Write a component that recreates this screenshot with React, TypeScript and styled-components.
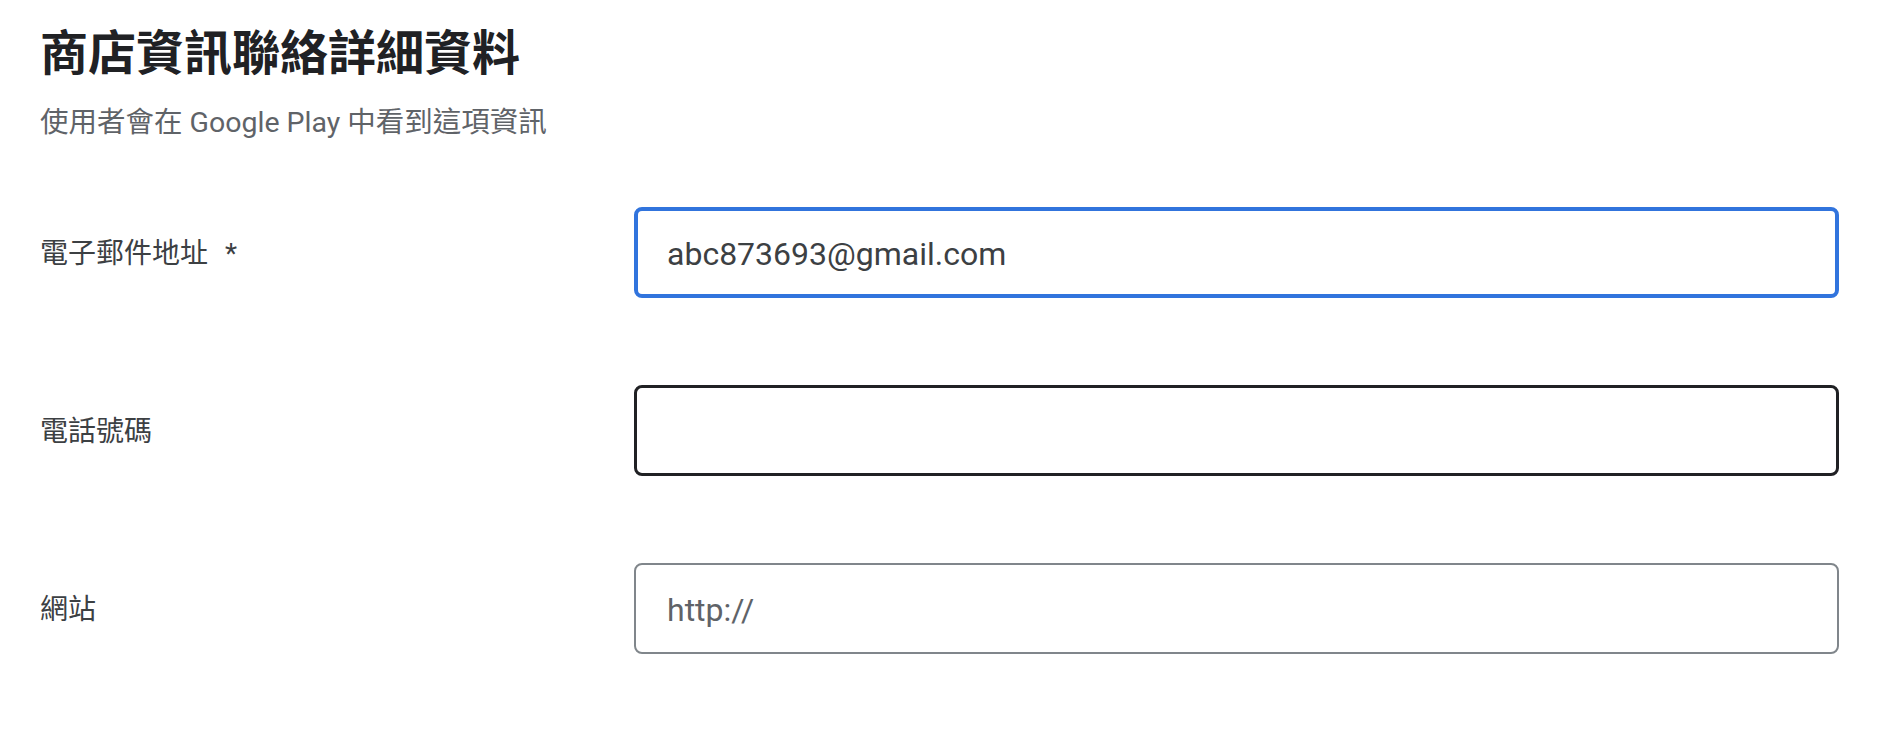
import React from "react";
import styled, { createGlobalStyle } from "styled-components";

const GlobalStyle = createGlobalStyle`
  html, body {
    margin: 0;
    padding: 0;
    background: #ffffff;
  }
  body {
    font-family: Roboto, "Noto Sans CJK TC", "Noto Sans", sans-serif;
    -webkit-font-smoothing: antialiased;
  }
  * { box-sizing: border-box; }
`;

const Page = styled.div`
  padding: 22px 59px 0 40px;
`;

const Title = styled.h1`
  margin: 0;
  font-size: 48px;
  line-height: 64px;
  font-weight: 700;
  color: #202124;
`;

const Subtitle = styled.p`
  margin: 17px 0 0;
  font-size: 28.5px;
  line-height: 40px;
  color: #5f6368;
`;

const Form = styled.div`
  display: grid;
  grid-template-columns: 594px 1fr;
  row-gap: 87px;
  margin-top: 64px;
  align-items: center;
`;

const Label = styled.label`
  font-size: 28px;
  line-height: 40px;
  padding-top: 3px;
  color: #3c4043;
`;

const Required = styled.span`
  margin-left: 17px;
`;

type Variant = "focused" | "hover" | "default";

const borderFor = (v: Variant) =>
  v === "focused" ? "4px solid #3174dd" : v === "hover" ? "3px solid #202124" : "2.5px solid #80868b";

const padFor = (v: Variant) => (v === "focused" ? 29 : v === "hover" ? 30 : 31);

const Field = styled.input<{ $variant: Variant }>`
  display: block;
  width: 100%;
  height: 91px;
  border: ${(p) => borderFor(p.$variant)};
  border-radius: 8px;
  padding: 2px ${(p) => padFor(p.$variant)}px 0;
  font-family: Roboto, "Noto Sans CJK TC", sans-serif;
  font-size: 32px;
  color: #3c4043;
  background: #fff;
  outline: none;
  &::placeholder {
    color: #5f6368;
    opacity: 1;
  }
`;

export default function App() {
  return (
    <>
      <GlobalStyle />
      <Page>
        <Title>商店資訊聯絡詳細資料</Title>
        <Subtitle>使用者會在 Google Play 中看到這項資訊</Subtitle>
        <Form>
          <Label>
            電子郵件地址<Required>*</Required>
          </Label>
          <Field $variant="focused" readOnly value="abc873693@gmail.com" />
          <Label>電話號碼</Label>
          <Field $variant="hover" readOnly value="" />
          <Label>網站</Label>
          <Field $variant="default" readOnly placeholder="http://" />
        </Form>
      </Page>
    </>
  );
}
